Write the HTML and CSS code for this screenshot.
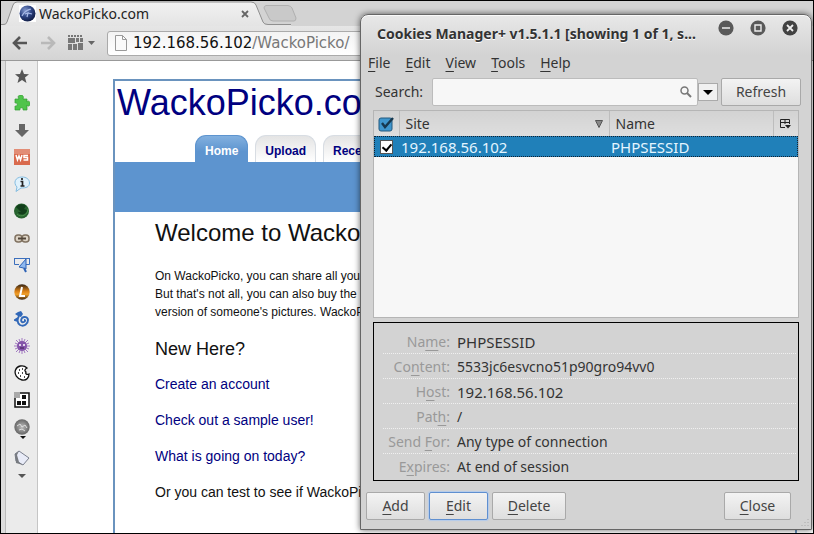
FILE: index.html
```html
<!DOCTYPE html>
<html lang="en">
<head>
<meta charset="utf-8">
<title>WackoPicko.com</title>
<link rel="stylesheet" href="styles.css">
</head>
<body>
<div class="browser">
  <div class="tabstrip">
    <svg class="tab-shape" width="290" height="25" viewBox="0 0 290 25" aria-hidden="true">
      <defs><linearGradient id="tabfill" x1="0" y1="0" x2="0" y2="1"><stop offset="0" stop-color="#f1f1f1"/><stop offset="1" stop-color="#e4e4e4"/></linearGradient></defs>
      <path d="M0 24H2Q5 24 6 21L12 4Q13 1 16 1H250Q254 1 255 4L262 21Q263 24 267 24H290V25H0Z" fill="url(#tabfill)"/>
      <path d="M0 23.500H2Q5 24 6 21L12 4Q13 1 16 1H250Q254 1 255 4L262 21Q263 23.500 267 23.500H290" fill="none" stroke="#8f8f8f"/>
    </svg>
    <div class="tab">
      <svg width="17" height="17" viewBox="0 0 17 17" aria-hidden="true"><defs><radialGradient id="ball" cx=".35" cy=".3" r=".8"><stop offset="0" stop-color="#8096cc"/><stop offset=".5" stop-color="#2c4382"/><stop offset="1" stop-color="#0b1538"/></radialGradient></defs><path d="M0 0H17V17H0Z" fill="#fff"/><circle cx="8.500" cy="8.500" r="8" fill="url(#ball)"/><path d="M3 11C6 5 9 5 12 4M6 9L9 8L8 12M9 8L13 9" fill="none" stroke="#a7b9e6" stroke-width="1.200"/></svg>
      <span class="tab-title">WackoPicko.com</span>
      <button class="plain" aria-label="Close tab"><svg width="8" height="8" viewBox="0 0 8 8"><path d="M1 1L7 7M7 1L1 7" stroke="#666" stroke-width="1.800"/></svg></button>
    </div>
    <button class="plain new-tab" aria-label="New tab"><svg width="34" height="17" viewBox="0 0 34 17"><path d="M3 .5H25Q28 1 29 3L33 13Q33 16 31 16H10Q7 16 6 13L1 3Q1 1 3 .5Z" fill="#c9c9c9" stroke="#b0b0b0"/></svg></button>
  </div>
  <div class="toolbar">
    <button class="plain" aria-label="Back"><svg width="16" height="14" viewBox="0 0 16 14"><path d="M15 7H3M8 1L2 7L8 13" fill="none" stroke="#555" stroke-width="2.600"/></svg></button>
    <button class="plain" aria-label="Forward"><svg width="16" height="14" viewBox="0 0 16 14"><path d="M1 7H13M8 1L14 7L8 13" fill="none" stroke="#b9b9b9" stroke-width="2.600"/></svg></button>
    <button class="plain" aria-label="Speed dial"><svg width="27" height="16" viewBox="0 0 27 16"><path d="M0 1H15" stroke="#777" stroke-width="2" stroke-dasharray="2 1"/><path d="M0 3H7V8H0ZM8 3H11V7H8ZM12 3H15V7H12ZM0 9H4V15H0ZM5 9H9V15H5ZM10 8H15V15H10Z" fill="#777"/><path d="M20 6H27L23.500 10Z" fill="#666"/></svg></button>
    <div class="address">
      <svg width="12" height="16" viewBox="0 0 12 16" aria-hidden="true"><path d="M.5.5H7.500L11.500 4.500V15.500H.5Z" fill="#fafafa" stroke="#999"/><path d="M7.500.5V4.500H11.500" fill="none" stroke="#999"/></svg>
      <span class="url"><b>192.168.56.102</b>/WackoPicko/</span>
    </div>
  </div>
  <div class="body">
    <nav class="sidebar" aria-label="Extensions">
      <svg width="16" height="16" viewBox="0 0 16 16"><path d="M8 1L10 6L15 6.300L11 9.500L12.500 15L8 12L3.500 15L5 9.500L1 6.300L6 6Z" fill="#555"/></svg>
      <svg width="16" height="16" viewBox="0 0 16 16"><path d="M1 4H5C3 1 5 0 7 0S10 2 9 4H13V7C15 5 16 7 16 9S14 12 13 10V15H9C10 12 5 12 6 15H1V11C4 12 4 7 1 8Z" fill="#4fc44b" stroke="#329b30" stroke-width=".7"/></svg>
      <svg width="16" height="16" viewBox="0 0 16 16"><path d="M5 2H11V8H15L8 15L1 8H5Z" fill="#666"/></svg>
      <svg width="16" height="16" viewBox="0 0 16 16"><path d="M0 0H16V16H0Z" fill="#d96a4d"/><path d="M0 0H16V5H0Z" fill="#e28d76"/><path d="M2 6L3.500 11L5 7L6.500 11L8 6M14 6.500H10V8.500H13.500V11H9.500" fill="none" stroke="#fff" stroke-width="1.500"/></svg>
      <svg width="16" height="16" viewBox="0 0 16 16"><path d="M8 1C12 1 15.500 3 15.500 7S12 12 7 12L2 15.500L3 11C-1 7 1 1 8 1Z" fill="#dff1fc" stroke="#83bce0"/><path d="M8 2V4M6.500 5.500H8.500V10M6.500 10H10.500" fill="none" stroke="#222" stroke-width="1.700"/></svg>
      <svg width="16" height="16" viewBox="0 0 16 16"><circle cx="7.500" cy="8" r="7.500" fill="#27632f"/><path d="M2 4C5 0 10 1 12 3L10 6L13 7C12 13 5 12 4 9L7 9L4 6Z" fill="#123e1b"/><path d="M3 11C7 15 14 12 14 6" fill="none" stroke="#4b914d"/></svg>
      <svg width="16" height="16" viewBox="0 0 16 16"><rect x="1" y="5" width="7" height="7" rx="3" fill="#ddd4c6" stroke="#807261" stroke-width="1.500"/><rect x="8" y="5" width="7" height="7" rx="3" fill="#ddd4c6" stroke="#807261" stroke-width="1.500"/><path d="M4 8.500H12" stroke="#51463a" stroke-width="2"/></svg>
      <svg width="16" height="16" viewBox="0 0 16 16"><path d="M0 1.500H16M.5 1.500V7.500H5M15.500 1.500V7.500H12" fill="none" stroke="#3b6fbd"/><path d="M12 2V12L9.500 11L5 10Z" fill="#8db8f0" stroke="#2e63b6"/><path d="M10 11L12 15" stroke="#2e63b6" stroke-width="2"/></svg>
      <svg width="16" height="16" viewBox="0 0 16 16"><defs><linearGradient id="lfill" x1="0" y1="0" x2="0" y2="1"><stop offset="0" stop-color="#332414"/><stop offset=".45" stop-color="#db8117"/><stop offset=".65" stop-color="#f2a12b"/><stop offset="1" stop-color="#3d2610"/></linearGradient></defs><circle cx="8" cy="8" r="7.700" fill="url(#lfill)"/><path d="M8 3L6 12H11" fill="none" stroke="#fff" stroke-width="2"/></svg>
      <svg width="16" height="16" viewBox="0 0 16 16"><path d="M1 3L4 1L7 0L9 3L7 6L4 5Z" fill="#3168b8"/><path d="M5 5C3 8 3 12 6 14C10 16 14 13 14 9C14 6 10 5 8 7C6 10 8 12 10 11C12 10 11 9 10 9M4 7L1 9L4 10" fill="none" stroke="#3168b8" stroke-width="1.900"/></svg>
      <svg width="16" height="16" viewBox="0 0 16 16"><path d="M8 0V16M0 8H16M2 2L14 14M14 2L2 14M5 1L11 15M11 1L5 15M1 5L15 11M15 5L1 11" stroke="#a37ac2"/><circle cx="8" cy="8" r="5" fill="#8555aa"/><path d="M5 7H7M9 7H11" stroke="#fff" stroke-width="1.500"/><path d="M6 10H10" stroke="#3c1c54"/></svg>
      <svg width="16" height="16" viewBox="0 0 16 16"><path d="M13 3C9-1 3 1 1.500 5S3 14 8 15S15 12 15 9C13 10 11 9 12 7C10 6 11 4 13 3Z" fill="#fff" stroke="#111" stroke-width="1.300"/><path d="M5 5H6M8 4H9M4 8H5M8 8H9M6 11H7M10 12H11" stroke="#111" stroke-width="1.500"/></svg>
      <svg width="16" height="16" viewBox="0 0 16 16"><path d="M1 1H15V15H1Z" fill="#fff" stroke="#111" stroke-width="1.500"/><path d="M8 3H12V7H8ZM3 9H7V13H3ZM8 9H12V13H8Z" fill="#111"/><path d="M0 0H6V6H0Z" fill="#aaa"/></svg>
      <svg width="16" height="20" viewBox="0 0 16 20"><defs><radialGradient id="gray"><stop offset="0" stop-color="#bbb"/><stop offset="1" stop-color="#666"/></radialGradient></defs><circle cx="8" cy="8" r="7.700" fill="url(#gray)"/><path d="M3 7L6 5L8 8L11 6L13 9M5 11L8 10L11 12" stroke="#ddd" fill="none"/><path d="M6 17H12L9 20Z" fill="#111"/></svg>
      <svg width="16" height="16" viewBox="0 0 16 16"><path d="M5 1L15 8L9 15L2 11L1 4Z" fill="#e8ebf7" stroke="#7a7f8e"/><path d="M5 1L3 5L5 12L9 15L2 13L1 4Z" fill="#777b80"/></svg>
      <svg class="more" width="8" height="5" viewBox="0 0 8 5"><path d="M0 0H8L4 4Z" fill="#555"/></svg>
    </nav>
    <main class="site">
      <h1>WackoPicko.com</h1>
      <div class="site-tabs">
        <a class="current" href="#">Home</a>
        <a href="#">Upload</a>
        <a href="#">Recent</a>
      </div>
      <div class="band"></div>
      <article>
        <h2>Welcome to WackoPicko</h2>
        <p class="intro">On WackoPicko, you can share all your<br>But that's not all, you can also buy the<br>version of someone's pictures. WackoPicko</p>
        <h3>New Here?</h3>
        <p><a href="#">Create an account</a></p>
        <p><a href="#">Check out a sample user!</a></p>
        <p><a href="#">What is going on today?</a></p>
        <p>Or you can test to see if WackoPicko</p>
      </article>
    </main>
  </div>
</div>

<section class="dialog" role="dialog" aria-labelledby="dialog-title">
  <header>
    <h2 id="dialog-title">Cookies Manager+ v1.5.1.1 [showing 1 of 1, s...</h2>
    <div class="controls">
      <button class="plain" aria-label="Minimize"><svg width="16" height="16" viewBox="0 0 16 16"><circle cx="8" cy="8" r="7.600" fill="#595959"/><path d="M4 8H12" stroke="#eee" stroke-width="1.500"/></svg></button>
      <button class="plain" aria-label="Maximize"><svg width="16" height="16" viewBox="0 0 16 16"><circle cx="8" cy="8" r="7.600" fill="#595959"/><path d="M5 5H11V11H5Z" fill="none" stroke="#eee" stroke-width="1.400"/></svg></button>
      <button class="plain" aria-label="Close window"><svg width="16" height="16" viewBox="0 0 16 16"><circle cx="8" cy="8" r="7.600" fill="#424242"/><path d="M5 5L11 11M11 5L5 11" stroke="#eee" stroke-width="1.800"/></svg></button>
    </div>
  </header>
  <div class="menu">
    <button class="plain"><u>F</u>ile</button>
    <button class="plain"><u>E</u>dit</button>
    <button class="plain"><u>V</u>iew</button>
    <button class="plain"><u>T</u>ools</button>
    <button class="plain"><u>H</u>elp</button>
  </div>
  <div class="search">
    <label for="search">Search:</label>
    <div class="field">
      <input id="search" type="text">
      <svg width="12" height="12" viewBox="0 0 12 12" aria-hidden="true"><circle cx="4.500" cy="4.500" r="3.500" fill="none" stroke="#777" stroke-width="1.500"/><path d="M7 7L11 11" stroke="#777" stroke-width="2"/></svg>
    </div>
    <button class="drop" aria-label="Search options"><svg width="10" height="5" viewBox="0 0 10 5"><path d="M0 0H10L5 5Z" fill="#000"/></svg></button>
    <button class="btn">Refresh</button>
  </div>
  <div class="list">
    <table>
      <colgroup><col class="c-check"><col class="c-site"><col><col class="c-pick"></colgroup>
      <thead>
        <tr>
          <th><svg class="all" width="16" height="16" viewBox="0 0 16 16" role="img" aria-label="Select all"><rect x="1" y="2" width="13" height="13" rx="2" fill="#3f96cd" stroke="#245b80"/><path d="M4 7L7 11L15 2" fill="none" stroke="#17384f" stroke-width="2.400"/></svg></th>
          <th><div class="sort">Site <svg width="8" height="8" viewBox="0 0 8 8" aria-hidden="true"><path d="M.5.5H7.500L4 7.500Z" fill="#888" stroke="#555"/></svg></div></th>
          <th>Name</th>
          <th><svg class="pick" width="11" height="10" viewBox="0 0 11 10" role="img" aria-label="Columns"><path d="M.5.5H9.500V5M.5.5V8.500H5M.5 3.500H9.500M5 .5V5" fill="none" stroke="#222"/><path d="M5 6H11L8 9.500Z" fill="#222"/></svg></th>
        </tr>
      </thead>
      <tbody>
        <tr>
          <td><input type="checkbox" checked aria-label="Select 192.168.56.102"></td>
          <td>192.168.56.102</td>
          <td colspan="2">PHPSESSID</td>
        </tr>
      </tbody>
    </table>
  </div>
  <dl class="details">
    <div><dt>Na<u>m</u>e:</dt><dd class="large">PHPSESSID</dd></div>
    <div><dt>Co<u>n</u>tent:</dt><dd>5533jc6esvcno51p90gro94vv0</dd></div>
    <div><dt>H<u>o</u>st:</dt><dd class="large">192.168.56.102</dd></div>
    <div><dt>Pat<u>h</u>:</dt><dd>/</dd></div>
    <div><dt>Send <u>F</u>or:</dt><dd>Any type of connection</dd></div>
    <div><dt>E<u>x</u>pires:</dt><dd>At end of session</dd></div>
  </dl>
  <footer>
    <button class="btn"><u>A</u>dd</button>
    <button class="btn focused"><u>E</u>dit</button>
    <button class="btn wide"><u>D</u>elete</button>
    <button class="btn close"><u>C</u>lose</button>
  </footer>
  <svg class="grip" width="10" height="10" viewBox="0 0 10 10" aria-hidden="true"><path d="M8 1V10M5 4V10M2 7V10" stroke="#aaa" stroke-dasharray="1 2"/></svg>
</section>
</body>
</html>
```
FILE: styles.css
```css
* { box-sizing: border-box; }
body {
  margin: 0;
  height: 100vh;
  position: relative;
  overflow: hidden;
  background: #000;
  color: #333;
  font: 14px/20px "Noto Sans", sans-serif;
}
h1, h2, h3, p, dl, dd { margin: 0; }
button, input { font: inherit; color: inherit; }
.plain { padding: 0; border: 0; background: none; }
svg { display: block; flex: none; }
u { text-underline-offset: 3px; text-decoration-thickness: 1px; }

.browser {
  height: 100%;
  border: 1px solid #000;
  display: flex;
  flex-direction: column;
  background: #fff;
}
.tabstrip {
  flex: none;
  height: 25px;
  position: relative;
  display: flex;
  align-items: center;
  gap: 14px;
  background: #d3d3d3;
}
.tab-shape { position: absolute; left: 0; top: 0; }
.tab {
  position: relative;
  width: 248px;
  padding-left: 18px;
  display: flex;
  align-items: center;
  gap: 3px;
  color: #222;
}
.tab-title { flex: 1; }
.new-tab { position: relative; }
.toolbar {
  flex: none;
  height: 35px;
  padding: 0 8px 0 11px;
  display: flex;
  align-items: center;
  gap: 12px;
  background: linear-gradient(#e6e6e6, #d4d4d4);
  border-bottom: 1px solid #999;
}
.address {
  flex: 1;
  height: 25px;
  padding: 0 7px;
  display: flex;
  align-items: center;
  gap: 6px;
  border: 1px solid #aaa;
  border-radius: 3px;
  background: linear-gradient(#f3f3f3, #fff);
}
.url { font: 15px/20px "DejaVu Sans", sans-serif; color: #777; }
.url b { font-weight: normal; color: #111; }
.body { flex: 1; min-height: 0; display: flex; }
.sidebar {
  flex: none;
  width: 37px;
  padding: 7px 3px 0 8px;
  display: flex;
  flex-direction: column;
  align-items: center;
  gap: 11px;
  background: linear-gradient(90deg, #ddd 4px, #bbb 4px, #bbb 5px, #ebebeb 5px);
  border-right: 1px solid #c5c5c5;
}
.more { margin-top: -3px; }
.site {
  flex: 1;
  margin: 18px 16px 0 75px;
  border: 2px solid #6a93be;
  border-bottom: 0;
  font-family: "Liberation Sans", sans-serif;
  color: #111;
}
.site a { color: #000080; text-decoration: none; }
.site h1 {
  padding: 0 2px;
  font-size: 36px;
  line-height: 44px;
  font-weight: normal;
  color: #000080;
}
.site-tabs { margin-top: 10px; padding-left: 80px; display: flex; gap: 7px; }
.site-tabs a {
  padding: 6px 9px 1px;
  border: 1px solid #d8dde3;
  border-bottom: 0;
  border-radius: 11px 11px 0 0;
  background: linear-gradient(#e4e4e4, #fff);
  font-size: 12px;
  line-height: 19px;
  font-weight: bold;
}
.site-tabs .current {
  border-color: #5d94cf;
  background: linear-gradient(#82b0df, #5d94cf 60%);
  color: #fff;
}
.band { height: 50px; background: #5d94cf; }
article { padding: 6px 0 0 40px; font-size: 14px; line-height: 18px; white-space: nowrap; }
article h2 { font-size: 24px; line-height: 30px; font-weight: normal; }
article .intro { margin: 19px 0 17px; font-size: 12px; }
article h3 { font-size: 18px; line-height: 22px; font-weight: normal; margin-bottom: 15px; }
article p { margin-bottom: 18px; }

.dialog {
  position: absolute;
  left: 360px;
  right: 2px;
  top: 14px;
  padding: 0 12px 9px;
  border: 1px solid #666;
  border-radius: 8px 8px 0 0;
  background: linear-gradient(#e8e8e8, #d3d3d3 40px);
  box-shadow: 0 0 6px rgba(0, 0, 0, .6), inset 0 1px #fafafa;
}
.dialog header {
  height: 37px;
  padding: 0 0 0 4px;
  display: flex;
  justify-content: space-between;
  align-items: center;
}
.dialog header h2 { font-size: 14px; line-height: 20px; white-space: nowrap; text-shadow: 0 1px #fff; }
.controls { display: flex; gap: 16px; padding: 0 1px 12px 0; }
.menu { display: flex; gap: 15px; height: 22px; margin-left: -5px; }
.search { display: flex; align-items: center; gap: 7px; height: 32px; margin-top: 2px; }
.search label { width: 52px; margin-left: 2px; }
.field {
  flex: 1;
  height: 28px;
  margin-left: -2px;
  padding-right: 5px;
  display: flex;
  align-items: center;
  border: 1px solid #bcbcbc;
  border-radius: 2px;
  background: #f7f7f7;
}
.field input { flex: 1; min-width: 0; border: 0; background: none; outline: 0; }
.drop {
  width: 20px;
  height: 18px;
  margin: 0 -4px 0 -7px;
  padding: 0;
  display: grid;
  place-items: center;
  border: 1px solid #aaa;
  background: #f0f0f0;
}
.btn {
  min-width: 59px;
  height: 28px;
  padding: 0 13px;
  border: 1px solid #a9a9a9;
  border-radius: 2px;
  background: linear-gradient(#f3f3f3, #dedede);
  color: #444;
}
.search .btn { min-width: 80px; margin-right: -2px; }
.list { height: 208px; margin-top: 2px; border: 1px solid #b5b5b5; background: #f7f7f7; }
.list table { width: 100%; border-collapse: collapse; table-layout: fixed; }
.c-check { width: 25px; }
.c-site { width: 210px; }
.c-pick { width: 25px; }
.list th {
  height: 25px;
  padding: 0 6px;
  border-right: 1px solid #bdbdbd;
  background: linear-gradient(#d2d2d2, #dedede);
  font-weight: normal;
  text-align: left;
}
.list th:first-child, .list th:last-child { padding: 0 4px; }
.list th:last-child { border-right: 0; }
.all, .pick { margin: auto; }
.sort { display: flex; justify-content: space-between; align-items: center; }
.list tbody tr { background: #2080b9; color: #e4f5ff; outline: 1px dotted #123; outline-offset: -1px; }
.list td { height: 21px; padding: 0 2px; font-size: 15px; line-height: 20px; }
.list td:first-child { padding: 0 6px; }
.list td input {
  appearance: none;
  display: block;
  width: 13px;
  height: 14px;
  margin: 0;
  border: 1px solid #555;
  background: #fff;
}
.list td input:checked::after {
  content: "";
  display: block;
  width: 4px;
  height: 7px;
  margin: 1px 0 0 3px;
  border: solid #000;
  border-width: 0 2px 2px 0;
  transform: rotate(40deg);
}
.details { margin-top: 4px; padding: 6px 2px 1px 9px; border: 1px solid #000; }
.details div {
  height: 25px;
  padding-top: 3px;
  display: grid;
  grid-template-columns: 67px 1fr;
  gap: 7px;
  border-bottom: 1px dotted #f0f0f0;
}
.details div:last-child { border-bottom: 0; }
.details dt { text-align: right; color: #999; white-space: nowrap; }
.details .large { font-size: 15px; }
.dialog footer { display: flex; gap: 4px; margin: 11px 8px 0 -7px; }
.wide { min-width: 74px; }
.focused { border-color: #5f8fd0; box-shadow: 0 0 1px 1px #b4cbeb; }
.close { min-width: 67px; margin-left: auto; }
.grip { position: absolute; right: 1px; bottom: 1px; }
```
